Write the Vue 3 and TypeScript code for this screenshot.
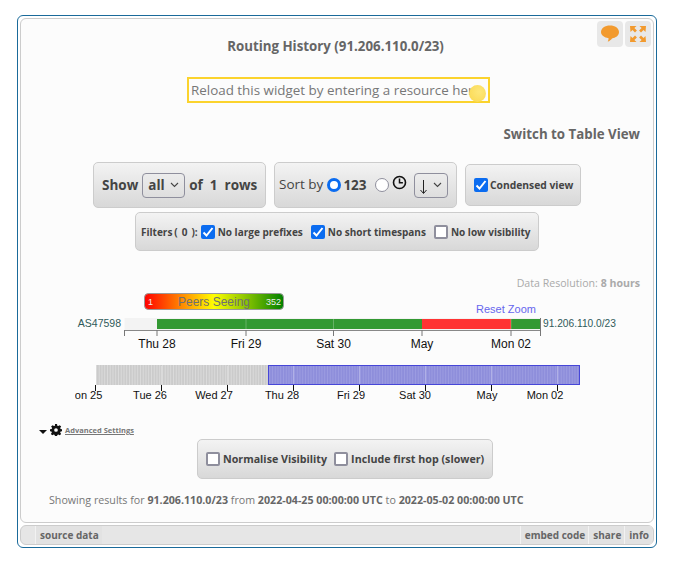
<script setup lang="ts">
const axisTicks = [
  { x: 157, label: 'Thu 28' },
  { x: 246, label: 'Fri 29' },
  { x: 333.5, label: 'Sat 30' },
  { x: 422, label: 'May' },
  { x: 511, label: 'Mon 02' },
]

const brushTicks = [
  { x: 95.5, labelX: 84, label: 'Mon 25' },
  { x: 161.5, labelX: 150, label: 'Tue 26' },
  { x: 227.5, labelX: 214, label: 'Wed 27' },
  { x: 293.5, labelX: 282, label: 'Thu 28' },
  { x: 359.5, labelX: 351, label: 'Fri 29' },
  { x: 425.5, labelX: 415, label: 'Sat 30' },
  { x: 491.5, labelX: 487, label: 'May' },
  { x: 557.5, labelX: 545, label: 'Mon 02' },
]
</script>

<template>
  <div class="widget">
    <div class="panel">
      <div class="corner-buttons">
        <div class="corner-btn">
          <svg width="20" height="20" viewBox="0 0 20 20">
            <path d="M10 1.500c5 0 9 2.700 9 6.600 0 3.600-3.400 6-7 6.300-.9 1.300-2.400 2.600-4.300 3.200.6-1 .9-2.100.9-3.300C4.300 13.600 1 11.500 1 8.100 1 4.200 5 1.500 10 1.500z" fill="#f29a2e" />
          </svg>
        </div>
        <div class="corner-btn">
          <svg width="20" height="20" viewBox="0 0 20 20" fill="#f29a2e">
            <path d="M2 2h6.500L6.400 4.100l2.500 2.500-1.900 1.900-2.500-2.500L2.500 8z" />
            <path d="M18 2h-6.500l2.100 2.100-2.500 2.500 1.900 1.900 2.500-2.500L17.500 8z" />
            <path d="M2 18h6.500l-2.100-2.100 2.500-2.500-1.900-1.900-2.500 2.500-2-2z" />
            <path d="M18 18h-6.500l2.100-2.100-2.500-2.500 1.900-1.900 2.500 2.500 2-2z" />
          </svg>
        </div>
      </div>

      <h1 class="title">Routing History (91.206.110.0/23)</h1>

      <div class="reload-row">
        <div class="reload-box">
          Reload this widget by entering a resource here
          <span class="ball"></span>
        </div>
      </div>

      <div class="switch-view">Switch to Table View</div>

      <div class="controls">
        <div class="box show-box">
          Show
          <span class="select select-all">all
            <svg width="9" height="6" viewBox="0 0 9 6"><path d="M1 1l3.500 3.500L8 1" fill="none" stroke="#444" stroke-width="1.100" /></svg>
          </span>
          of &nbsp;1 &nbsp;rows
        </div>
        <div class="box sort-box">
          <span class="sort-label">Sort by</span>
          <span class="radio on"></span>
          <b class="sort-num">123</b>
          <span class="radio"></span>
          <svg class="clock" width="15" height="15" viewBox="0 0 15 15">
            <circle cx="7.500" cy="7.500" r="6" fill="none" stroke="#111" stroke-width="1.600" />
            <path d="M7.500 3.500v4.200h3.400" fill="none" stroke="#111" stroke-width="1.500" />
          </svg>
          <span class="select select-dir">
            <svg class="arrow" width="9" height="14" viewBox="0 0 9 14"><path d="M4.500 0v13M1.500 10l3 3.500 3-3.500" fill="none" stroke="#222" /></svg>
            <svg width="9" height="6" viewBox="0 0 9 6"><path d="M1 1l3.500 3.500L8 1" fill="none" stroke="#444" stroke-width="1.100" /></svg>
          </span>
        </div>
        <div class="box condensed-box">
          <span class="check on"><svg width="14" height="14" viewBox="0 0 14 14"><path d="M2.500 7.500l3 3 6-7.500" fill="none" stroke="#fff" stroke-width="2" /></svg></span>
          Condensed view
        </div>
      </div>

      <div class="filters-row">
        <div class="box filters-box">
          <span class="filter-label">Filters ( &nbsp;0 &nbsp;):</span>
          <span class="check on"><svg width="14" height="14" viewBox="0 0 14 14"><path d="M2.500 7.500l3 3 6-7.500" fill="none" stroke="#fff" stroke-width="2" /></svg></span>
          <span class="filter-text">No large prefixes</span>
          <span class="check on"><svg width="14" height="14" viewBox="0 0 14 14"><path d="M2.500 7.500l3 3 6-7.500" fill="none" stroke="#fff" stroke-width="2" /></svg></span>
          <span class="filter-text">No short timespans</span>
          <span class="check"></span>
          <span>No low visibility</span>
        </div>
      </div>

      <div class="resolution">Data Resolution: <b>8 hours</b></div>

      <svg class="chart" width="632" height="118" viewBox="21 290 632 118">
        <defs>
          <linearGradient id="peers" x1="0" x2="1" y1="0" y2="0">
            <stop offset="0" stop-color="#ff0000" />
            <stop offset="0.5" stop-color="#ffff00" />
            <stop offset="1" stop-color="#008000" />
          </linearGradient>
          <pattern id="stripes" width="2.750" height="20" patternUnits="userSpaceOnUse" x="96">
            <rect width="2.750" height="20" fill="#cbcbcb" />
            <rect width="0.800" height="20" fill="#dedede" />
          </pattern>
          <pattern id="stripes-blue" width="2.750" height="20" patternUnits="userSpaceOnUse" x="96">
            <rect width="2.750" height="20" fill="#8e8edb" />
            <rect width="0.800" height="20" fill="#9e9ee2" />
          </pattern>
          <clipPath id="brush-clip"><rect x="75" y="355" width="560" height="50" /></clipPath>
        </defs>

        <!-- legend -->
        <rect x="144.500" y="293.500" width="139" height="16" rx="4" fill="url(#peers)" stroke="#999" />
        <text x="148" y="305" class="legend-num">1</text>
        <text x="214" y="306" class="legend-title" text-anchor="middle">Peers Seeing</text>
        <text x="281" y="305" class="legend-num" text-anchor="end">352</text>
        <text x="476" y="313" class="reset">Reset Zoom</text>

        <!-- main timeline -->
        <text x="121" y="327" class="row-label" text-anchor="end">AS47598</text>
        <text x="543" y="327" class="row-label row-label-right">91.206.110.0/23</text>
        <rect x="124.500" y="318" width="416" height="12" fill="#f3f3f3" />
        <rect x="157" y="319" width="265" height="10" fill="#339933" />
        <rect x="422" y="319" width="89" height="10" fill="#ff3333" />
        <rect x="511" y="319" width="29.500" height="10" fill="#339933" />
        <path d="M246 319v10M333.500 319v10M511 319v10" stroke="#ffffff" stroke-opacity="0.25" />
        <path d="M124.500 330.500H540.500" stroke="#888" fill="none" />
        <path d="M540.500 318v18M124.500 330v6" stroke="#777" fill="none" />
        <path v-for="t in axisTicks" :key="t.label" :d="`M${t.x} 330v6`" stroke="#777" fill="none" />
        <text v-for="t in axisTicks" :key="t.label" :x="t.x" y="348" class="axis-label" text-anchor="middle">{{ t.label }}</text>

        <!-- brush -->
        <rect x="96" y="365" width="172" height="20" fill="url(#stripes)" />
        <rect x="268" y="365" width="312" height="20" fill="url(#stripes-blue)" />
        <rect x="268.500" y="365.500" width="311" height="19" fill="none" stroke="#4646d8" />
        <path v-for="t in brushTicks" :key="t.x" :d="`M${t.x} 366v18`" stroke="#ffffff" stroke-opacity="0.3" />
        <g clip-path="url(#brush-clip)">
          <path v-for="t in brushTicks" :key="t.x" :d="`M${t.x} 385v6`" stroke="#111" />
          <text v-for="t in brushTicks" :key="t.label" :x="t.labelX" y="399" class="brush-label" text-anchor="middle">{{ t.label }}</text>
        </g>
      </svg>

      <div class="advanced">
        <span class="caret"></span>
        <svg class="gear" width="12" height="12" viewBox="0 0 13 13">
          <path d="M5.400 0h2.200l.3 1.800 1.100.5 1.500-1 1.600 1.500-1.100 1.500.5 1.100 1.800.3v2.200l-1.800.3-.5 1.100 1.100 1.500-1.600 1.500-1.500-1-1.100.5-.3 1.800H5.400l-.3-1.800-1.100-.5-1.500 1-1.600-1.500 1.100-1.500-.5-1.100L0 7.900V5.700l1.800-.3.5-1.100L1.200 2.800l1.600-1.500 1.500 1 1.100-.5z M6.500 4.500a2 2 0 100 4 2 2 0 000-4z" fill="#111" fill-rule="evenodd" />
        </svg>
        <span class="advanced-link">Advanced Settings</span>
      </div>

      <div class="settings-row">
        <div class="box settings-box">
          <span class="check"></span>
          <span class="settings-text">Normalise Visibility</span>
          <span class="check"></span>
          <span>Include first hop (slower)</span>
        </div>
      </div>

      <p class="results">
        Showing results for <b>91.206.110.0/23</b> from <b>2022-04-25 00:00:00 UTC</b> to <b>2022-05-02 00:00:00 UTC</b>
      </p>
    </div>

    <div class="footer">
      <div class="footer-left">
        <span class="footer-tab">source data</span>
      </div>
      <div class="footer-right">
        <span class="footer-tab">embed code</span>
        <span class="footer-tab">share</span>
        <span class="footer-tab">info</span>
      </div>
    </div>
  </div>
</template>

<style scoped>
.widget {
  box-sizing: border-box;
  width: 640px;
  height: 533px;
  margin: 15px 0 0 17px;
  padding: 2px;
  border: 1px solid #1a6a9a;
  border-radius: 6px;
  background: #fff;
  font-family: "Open Sans", "Liberation Sans", sans-serif;
  color: #666;
  display: flex;
  flex-direction: column;
  gap: 2px;
}

.panel {
  position: relative;
  box-sizing: border-box;
  height: 507px;
  border: 1px solid #ccc;
  border-radius: 6px;
  background: #fcfcfc;
}

.corner-buttons {
  position: absolute;
  top: 2px;
  right: 2px;
  display: flex;
  gap: 2px;
}

.corner-btn {
  width: 26px;
  height: 26px;
  border-radius: 4px;
  background: #e8e8e8;
  display: flex;
  align-items: center;
  justify-content: center;
}

.title {
  margin: 18px 0 0;
  padding-right: 3px;
  font-size: 13.300px;
  line-height: 18px;
  font-weight: 700;
  color: #666;
  text-align: center;
}

.reload-row {
  display: flex;
  justify-content: flex-start;
  margin: 22px 0 0 166px;
}

.reload-box {
  position: relative;
  box-sizing: border-box;
  width: 303px;
  height: 26px;
  padding-left: 2px;
  border: 2px solid #fbd32d;
  font-size: 13.400px;
  line-height: 22px;
  color: #777;
  white-space: nowrap;
}

.ball {
  position: absolute;
  right: 2px;
  top: 6px;
  width: 17px;
  height: 17px;
  border-radius: 50%;
  background: radial-gradient(circle at 60% 40%, #fde77a, #fbdc5b 70%, #fbe27e);
}

.switch-view {
  margin: 22px 13px 0 0;
  font-size: 13.300px;
  line-height: 18px;
  font-weight: 700;
  text-align: right;
  color: #666;
}

.controls {
  display: flex;
  align-items: center;
  margin: 19px 0 0 72px;
  gap: 8px;
}

.box {
  box-sizing: border-box;
  display: flex;
  align-items: center;
  border: 1px solid #ccc;
  border-radius: 5px;
  background: linear-gradient(180deg, #f3f3f3 0%, #d8d8d8 100%);
  color: #444;
  white-space: nowrap;
}

.show-box {
  width: 173px;
  height: 46px;
  padding-left: 8px;
  font-size: 13.500px;
  font-weight: 700;
  gap: 4px;
}

.sort-box {
  width: 183px;
  height: 46px;
  padding-left: 4px;
  font-size: 13.500px;
  gap: 0;
}

.sort-label {
  margin-right: 4px;
  margin-top: -3px;
}

.sort-num {
  margin: 0 8px 0 2px;
  font-size: 13.500px;
}

.clock {
  margin: -5px 0 0 3px;
}

.select {
  box-sizing: border-box;
  display: inline-flex;
  align-items: center;
  justify-content: space-between;
  height: 25px;
  border: 1px solid #8f8f9d;
  border-radius: 4px;
  color: #444;
}

.select-all {
  width: 43px;
  padding: 0 5px 0 5px;
}

.select-dir {
  width: 34px;
  margin-left: 7px;
  padding: 0 5px 0 4px;
}

.arrow {
  margin-top: 3px;
}

.condensed-box {
  width: 116px;
  height: 42px;
  padding-left: 8px;
  gap: 2px;
  font-size: 10.300px;
  font-weight: 700;
}

.check {
  box-sizing: border-box;
  flex: none;
  display: inline-flex;
  align-items: center;
  justify-content: center;
  width: 14px;
  height: 14px;
  border: 2px solid #8f8f9d;
  border-radius: 2px;
  background: #fff;
}

.check.on {
  border: none;
  background: #0b6cf0;
}

.radio {
  box-sizing: border-box;
  flex: none;
  width: 14px;
  height: 14px;
  border: 1.500px solid #8f8f9d;
  border-radius: 50%;
  background: #fff;
}

.radio.on {
  border: 3.500px solid #0b6cf0;
}

.filters-row {
  margin: 4px 0 0 114px;
  display: flex;
}

.filters-box {
  width: 404px;
  height: 39px;
  padding-left: 5px;
  gap: 3px;
  font-size: 10px;
  font-weight: 700;
}

.filter-label {
  word-spacing: -0.600px;
}

.filter-text {
  margin-right: 5px;
}

.resolution {
  margin: 25px 13px 0 0;
  font-size: 10.600px;
  line-height: 14px;
  color: #aaa;
  text-align: right;
}

.chart {
  display: block;
  margin-top: 0;
  font-family: "Liberation Sans", Arial, sans-serif;
}

.legend-num {
  font-size: 9px;
  fill: #eee;
}

.legend-title {
  font-size: 12px;
  fill: #6f6f6f;
}

.reset {
  font-size: 11px;
  fill: #6666ee;
}

.row-label {
  font-size: 10.500px;
  fill: #2f5a5a;
}

.row-label-right {
  font-size: 10.200px;
}

.axis-label {
  font-size: 12px;
  fill: #111;
}

.brush-label {
  font-size: 11px;
  fill: #111;
}

.advanced {
  display: flex;
  align-items: center;
  margin: 15px 0 0 18px;
  gap: 3px;
  height: 14px;
}

.caret {
  width: 0;
  height: 0;
  margin-top: 3px;
  border-left: 4px solid transparent;
  border-right: 4px solid transparent;
  border-top: 4px solid #111;
}

.advanced-link {
  font-size: 7.500px;
  font-weight: 700;
  color: #777;
  text-decoration: underline;
}

.settings-row {
  display: flex;
  margin: 2px 0 0 176px;
}

.settings-box {
  width: 296px;
  height: 40px;
  padding-left: 8px;
  gap: 3px;
  font-size: 10.700px;
  font-weight: 700;
}

.settings-text {
  margin-right: 4px;
}

.results {
  margin: 13px 0 0 28px;
  font-size: 10.680px;
  line-height: 16px;
  color: #777;
  white-space: nowrap;
}

.results b {
  color: #666;
}

.footer {
  box-sizing: border-box;
  flex: 1;
  display: flex;
  justify-content: space-between;
  border: 1px solid #ccc;
  border-radius: 6px;
  background: #e6e6e6;
  padding: 0 1px;
}

.footer-left {
  display: flex;
  padding-left: 13px;
}

.footer-right {
  display: flex;
}

.footer-tab {
  padding: 0 3px 0 4px;
  border-left: 1px solid #f2f2f2;
  background: #e2e2e2;
  font-size: 10px;
  font-weight: 700;
  line-height: 18px;
  color: #666;
}
</style>

<style>
html,
body {
  margin: 0;
  background: #fff;
}
</style>
